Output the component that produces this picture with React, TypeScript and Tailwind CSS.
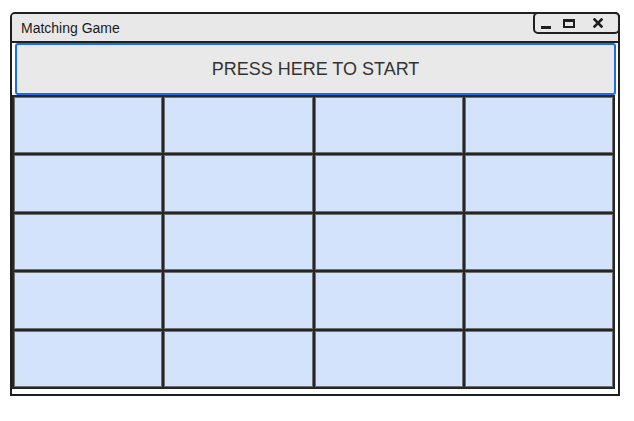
import React from "react";

const ROWS = 5;
const COLS = 4;

const WindowControls: React.FC = () => (
  <div className="absolute right-[-2px] top-[-2px] w-[87px] h-[22px] rounded-[5px] border-2 border-[#1f1f1f] bg-[#e8e8e8] flex items-center">
    {/* minimize */}
    <div className="ml-[6px] mt-[8px] w-[10px] h-[3px] bg-[#1f1f1f]" />
    {/* restore */}
    <div className="ml-[12px] w-[12px] h-[9px] border-2 border-t-[3px] border-[#1f1f1f]" />
    {/* close */}
    <svg className="ml-[18px]" width="10" height="10" viewBox="0 0 10 10">
      <path d="M1.5 1.5 L8.5 8.5 M8.5 1.5 L1.5 8.5" stroke="#1f1f1f" strokeWidth="2.6" strokeLinecap="square" />
    </svg>
  </div>
);

export default function App() {
  const cells = Array.from({ length: ROWS * COLS }, (_, i) => i);

  return (
    <div className="w-[634px] h-[421px] bg-white pt-[12px] pl-[10px] font-['Liberation_Sans',Arial,sans-serif]">
      <div className="relative w-[610px] h-[384px] border-2 border-[#1f1f1f] rounded-t-[5px] bg-white flex flex-col">
        {/* title bar */}
        <div className="h-[29px] shrink-0 bg-[#e8e8e8] border-b-2 border-[#1f1f1f] rounded-t-[3px] flex items-center pl-[9px]">
          <span className="text-[14px] text-[#1a1a1a] leading-none">Matching Game</span>
        </div>
        <WindowControls />

        {/* start button */}
        <button className="ml-[3px] w-[601px] h-[52px] shrink-0 border-2 border-[#1a6fe6] rounded-[3px] bg-[#e9e9e9] text-[18px] text-[#333333] leading-none">
          PRESS HERE TO START
        </button>

        {/* card grid */}
        <div className="w-[603px] h-[294px] grid grid-cols-4 grid-rows-5 gap-[2px] p-[2px] bg-[#262626]">
          {cells.map((i) => (
            <div key={i} className="bg-[#d3e3fb] border border-[#707070]" />
          ))}
        </div>
      </div>
    </div>
  );
}
